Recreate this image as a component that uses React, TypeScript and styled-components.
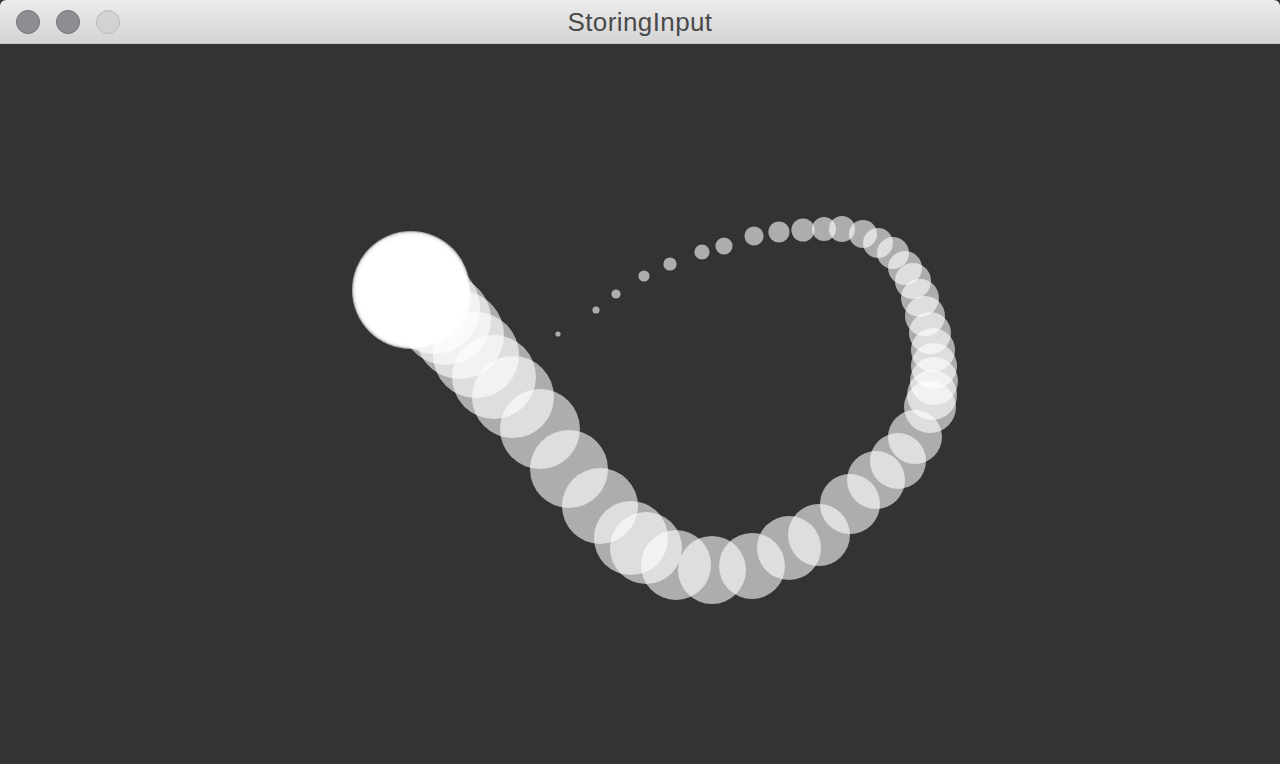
import React from "react";
import styled, { createGlobalStyle } from "styled-components";

const Global = createGlobalStyle`
  html, body { margin: 0; padding: 0; background: #333333; overflow: hidden; }
  #root { width: 1280px; height: 764px; }
`;

const Window = styled.div`
  width: 1280px;
  height: 764px;
  display: flex;
  flex-direction: column;
  background: #333333;
`;

const TitleBar = styled.header`
  height: 43px;
  flex: 0 0 43px;
  display: grid;
  grid-template-columns: 1fr auto 1fr;
  align-items: center;
  padding: 0 16px;
  background: linear-gradient(#ececec, #d4d4d4);
  border-bottom: 1px solid #c4c4c4;
  border-radius: 6px 6px 0 0;
`;

const Lights = styled.div`
  display: flex;
  gap: 16px;
  align-items: center;
  padding-top: 1px;
`;

const Light = styled.span<{ $dim?: boolean }>`
  width: 24px;
  height: 24px;
  border-radius: 50%;
  box-sizing: border-box;
  background: ${(p) => (p.$dim ? "#d2d2d2" : "#8e8d93")};
  border: 1px solid ${(p) => (p.$dim ? "#b9b9b9" : "#747378")};
`;

const Title = styled.h1`
  margin: 0;
  font-family: "Liberation Sans", Arial, sans-serif;
  font-weight: 400;
  font-size: 26px;
  letter-spacing: 0.4px;
  color: #4a4a4a;
  padding-top: 2px;
`;

const Canvas = styled.main`
  flex: 1;
  background: #333333;
`;

const Sketch = styled.svg`
  display: block;
`;

const pts: [number, number][] = [
  [558, 334],
  [558, 334],
  [558, 334],
  [596, 310],
  [616, 294],
  [644, 276],
  [670, 264],
  [702, 252],
  [724, 246],
  [754, 236],
  [779, 232],
  [803, 230],
  [824, 229],
  [842, 229],
  [863, 234],
  [878, 243],
  [893, 253],
  [905, 268],
  [913, 281],
  [920, 298],
  [925, 316],
  [930, 333],
  [933, 350],
  [934, 366],
  [934, 381],
  [932, 395],
  [930, 407],
  [915, 437],
  [898, 461],
  [876, 480],
  [850, 504],
  [819, 535],
  [789, 548],
  [752, 566],
  [712, 570],
  [676, 565],
  [646, 548],
  [631, 538],
  [600, 506],
  [569, 469],
  [540, 429],
  [513, 397],
  [494, 377],
  [476, 355],
  [460, 335],
  [446, 320],
  [434, 308],
  [424, 299],
  [418, 294],
  [414, 292],
  [411, 290],
  [411, 290],
  [411, 290],
  [411, 290],
  [411, 290],
  [411, 290],
  [411, 290],
  [411, 290],
  [411, 290],
  [411, 290],
];

export default function App() {
  return (
    <>
      <Global />
      <Window>
        <TitleBar>
          <Lights>
            <Light />
            <Light />
            <Light $dim />
          </Lights>
          <Title>StoringInput</Title>
          <span />
        </TitleBar>
        <Canvas>
          <Sketch width={1280} height={720} viewBox="0 44 1280 720">
            {pts.map(([x, y], i) =>
              i < 2 ? null : (
                <circle
                  key={i}
                  cx={x}
                  cy={y}
                  r={i < 12 ? i + 0.6 : i}
                  fill="#ffffff"
                  fillOpacity={0.6}
                />
              )
            )}
          </Sketch>
        </Canvas>
      </Window>
    </>
  );
}
